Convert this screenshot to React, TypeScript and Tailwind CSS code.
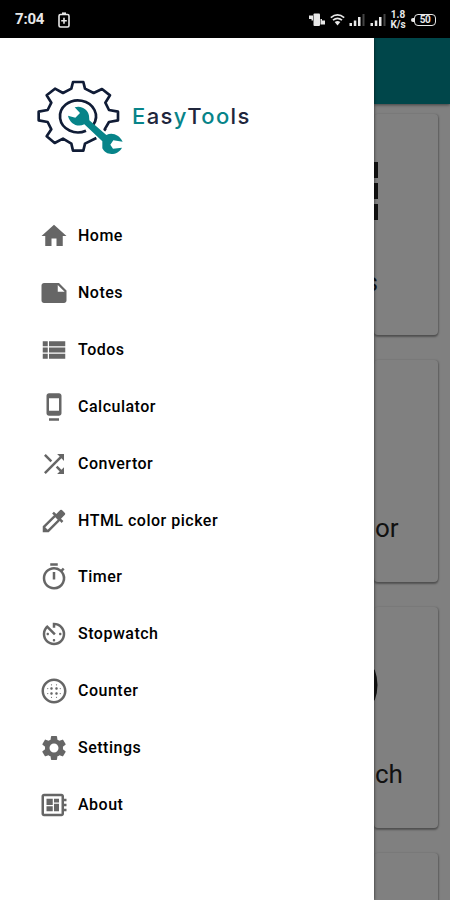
import React from "react";
import type { IconType } from "react-icons";
import {
  MdAvTimer,
  MdBlurCircular,
  MdColorize,
  MdOutlineDeveloperBoard,
  MdDock,
  MdHome,
  MdNote,
  MdSettings,
  MdShuffle,
  MdOutlineTimer,
  MdViewList,
} from "react-icons/md";

const items: { label: string; Icon: IconType }[] = [
  { label: "Home", Icon: MdHome },
  { label: "Notes", Icon: MdNote },
  { label: "Todos", Icon: MdViewList },
  { label: "Calculator", Icon: MdDock },
  { label: "Convertor", Icon: MdShuffle },
  { label: "HTML color picker", Icon: MdColorize },
  { label: "Timer", Icon: MdOutlineTimer },
  { label: "Stopwatch", Icon: MdAvTimer },
  { label: "Counter", Icon: MdBlurCircular },
  { label: "Settings", Icon: MdSettings },
  { label: "About", Icon: MdOutlineDeveloperBoard },
];

function Signal() {
  return (
    <svg className="h-[14px] w-[17px]" viewBox="0 0 17 14" fill="#e8e8e8">
      <rect x="0.5" y="10" width="2.5" height="3" />
      <rect x="4.8" y="7.5" width="2.5" height="5.5" />
      <rect x="9" y="4" width="2.5" height="9" />
      <rect x="13.5" y="1" width="2" height="12" fill="#444" />
    </svg>
  );
}

function StatusBar() {
  return (
    <header className="flex h-[38px] items-center bg-black pt-px text-[#e8e8e8]">
      <span className="ml-[15px] w-[43px] text-[15px] font-bold leading-none tracking-[-0.2px]">7:04</span>
      <svg className="h-4 w-3" viewBox="0 0 12 16" fill="none" stroke="#e8e8e8" strokeWidth="1.6">
        <rect x="1" y="2.5" width="10" height="12.5" rx="1.5" />
        <path d="M4 1.2h4" />
        <path d="M6 5.8v6M3.2 8.8h5.6" />
      </svg>
      <div className="ml-auto mr-[14px] flex items-center">
        <svg className="mr-[5px] h-[14px] w-4" viewBox="0 0 16 14" fill="#e8e8e8">
          <rect x="4.5" y="0.5" width="6.5" height="12.5" rx="1" />
          <path d="M0 2.5h4v5H2.5V6H0zM11.5 6H13v1.5h3v4h-4.5z" />
        </svg>
        <svg className="mr-[4px] h-3 w-[15px]" viewBox="0 0 15 12" fill="none" stroke="#e8e8e8" strokeWidth="1.7">
          <path d="M.8 3.6Q7.5-1.8 14.2 3.6M3 6.2q4.500-3.600 9 0" />
          <path d="M4.700 7.900q2.800-1.800 5.600 0L7.500 11.500z" fill="#e8e8e8" stroke="none" />
        </svg>
        <Signal />
        <span className="w-[4px]" />
        <Signal />
        <span className="ml-[3px] mr-[5px] w-4 text-center text-[10px] font-bold leading-[9.500px]">
          <span className="block">1.8</span>
          <span className="block">K/s</span>
        </span>
        <span className="h-1 w-[3px] rounded-l-sm bg-[#e8e8e8]" />
        <span className="flex h-3 w-[22px] items-center justify-center rounded-[4px] border-[1.500px] border-[#e8e8e8] text-[10px] font-bold leading-none tracking-[-0.500px]">
          50
        </span>
      </div>
    </header>
  );
}

function Logo() {
  return (
    <div className="flex h-[95px] items-center">
      <svg className="ml-[30px] h-[95px] w-[96px] shrink-0" viewBox="0 0 288 285">
        <g fill="none" stroke="#101c36" strokeWidth="8" strokeLinejoin="round">
          <path d="M228 181L224 178L237 156L264 151V125L237 120L226 98L240 76L216 57L191 69L165 56L160 36H129L124 56L99 69L75 56L50 76L64 98L53 120L26 125V151L53 156L64 178L50 199L74 219L99 206L124 221L129 242H160L165 221L199 204" />
          <path d="M190 163A54 48 0 1 0 168 181" transform="translate(0 1)" />
        </g>
        <path
          fill="#078489"
          d="M134 112C151 105 174 116 177 137L178 151L229 195C246 186 267 193 278 215L250 211L241 224L249 236L276 233C264 256 229 260 217 235L217 214L163 163C142 173 119 161 114 137L136 143L150 129Z"
        />
      </svg>
      <span className="ml-[6px] mt-[-4px] font-[Inter,sans-serif] text-[22px] font-medium leading-none tracking-[1.400px] text-[#20263c]">
        <span className="text-[#078489]">E</span>as<span className="text-[#078489]">y</span>T
        <span className="text-[#078489]">oo</span>ls
      </span>
    </div>
  );
}

function Drawer() {
  return (
    <aside className="relative z-10 w-[374px] shrink-0 bg-white pt-8 shadow-[0_0_3px_rgba(0,0,0,0.700)]">
      <Logo />
      <nav className="mt-[43px] flex flex-col">
        {items.map(({ label, Icon }) => (
          <a key={label} className="flex h-[56.850px] items-center pl-[39px] text-black">
            <Icon className="h-[30px] w-[30px] shrink-0 text-[#666]" />
            <span className="ml-[9px] text-[16px] font-medium leading-none tracking-[0.500px]">{label}</span>
          </a>
        ))}
      </nav>
    </aside>
  );
}

function Card({ children, className }: { children?: React.ReactNode; className: string }) {
  return (
    <section
      className={`relative mr-3 shrink-0 rounded-[4px] bg-[#808080] shadow-[0_2px_2px_rgba(0,0,0,0.350),1px_0_2px_rgba(0,0,0,0.200)] ${className}`}
    >
      {children}
    </section>
  );
}

function Page() {
  return (
    <main className="flex min-w-0 flex-1 flex-col bg-[#808080] text-[25px] leading-none text-[#111]">
      <div className="z-[1] h-[66px] shrink-0 bg-[#00464a] shadow-[0_1px_3px_rgba(0,0,0,0.500)]" />
      <Card className="mt-[10px] h-[221px] pt-[48px]">
        <div className="flex h-[58px] w-[4px] flex-col justify-between">
          <i className="h-4 bg-[#111]" />
          <i className="h-4 bg-[#111]" />
          <i className="h-4 bg-[#111]" />
        </div>
        <div className="mt-[50px] ml-[-9px]">s</div>
      </Card>
      <Card className="mt-[25px] h-[222px] pt-[155px]">
        <div className="ml-px text-[26px]">or</div>
      </Card>
      <Card className="mt-[25px] h-[221px] pt-[62px]">
        <svg className="h-[32px] w-[5px]" viewBox="0 0 5 32" fill="none" stroke="#111" strokeWidth="3.500">
          <path d="M-1 1Q4.500 16-1 31" />
        </svg>
        <div className="mt-[60px] ml-px text-[26px]">ch</div>
      </Card>
      <Card className="mt-[25px] h-[60px]" />
    </main>
  );
}

export default function App() {
  return (
    <div className="flex h-[900px] w-[450px] flex-col overflow-hidden font-[Roboto,sans-serif]">
      <StatusBar />
      <div className="flex min-h-0 flex-1 overflow-hidden">
        <Drawer />
        <Page />
      </div>
    </div>
  );
}
